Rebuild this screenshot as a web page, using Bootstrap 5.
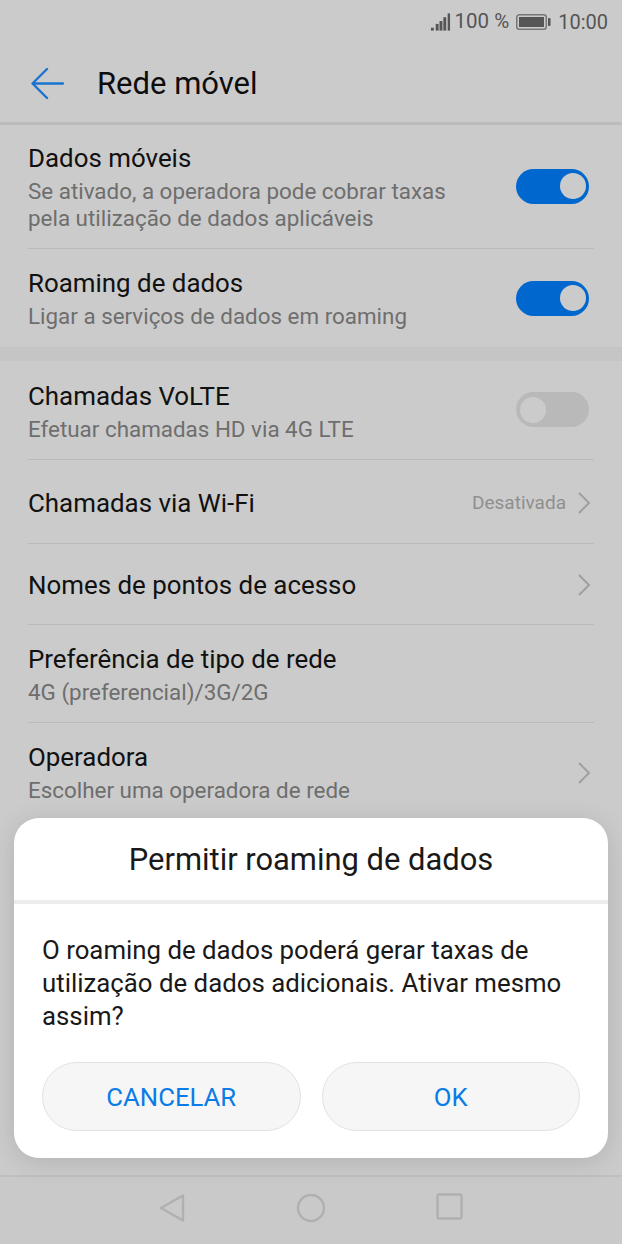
<!DOCTYPE html>
<html lang="pt">
<head>
<meta charset="utf-8">
<title>Rede móvel</title>
<link href="https://cdn.jsdelivr.net/npm/bootstrap@5.3.0/dist/css/bootstrap.min.css" rel="stylesheet">
<style>
html,body{margin:0;height:1244px;overflow:hidden}
body{background:#cbcbcb;font-family:Roboto,"Liberation Sans",sans-serif;color:#0d0d0d;position:relative;width:622px}
.screen-col{height:1244px}
.stat-bar{height:40px;padding:3px 14px 0 0;color:#555;font-size:20px;gap:4px}
.pct{font-size:20.500px}
.batt{margin-left:3px}
.clock{margin-left:3px}
.app-bar{height:82px;padding:5px 0 0 30px;gap:33px}
.app-title{font-size:31px;line-height:1;margin:0;font-weight:400;color:#0d0d0d}
.thick-rule{height:3px;background:#bcbcbc}
.pref-row{margin-left:28px;width:566px;border-bottom:1px solid #bababa;padding-right:5px}
.pref-row.last{border-bottom:0}
.r1{height:124px}.r2{height:98px}.r3{height:99px;padding-top:2px}.r4{height:84px;padding-top:3px}.r5{height:81px;padding-top:3px}.r6{height:98px;padding-top:1px}.r7{height:98px;padding-top:1px}
.pref-title{font-size:25.900px;line-height:33px;color:#111}
.pref-sub{font-size:22.400px;line-height:27px;color:#6e6e6e;margin-top:3px}
.band{height:14px;background:#c5c5c5}
.tgl{width:73px;height:35px;border-radius:18px;position:relative;flex:none;background:#0067ce}
.r1 .tgl{margin-top:-1px}
.tgl::after{content:"";position:absolute;top:4.500px;right:3.500px;width:26px;height:26px;border-radius:50%;background:#cbcbcb}
.tgl.off{background:#b9b9b9;margin-top:-3px}
.tgl.off::after{right:auto;left:4px}
.val{font-size:19px;color:#8f8f8f;margin-right:11px}
.chev{flex:none;margin-right:-2px}
.r5 .chev{margin-top:-2px}
.nav-strip{position:absolute;left:0;right:0;top:1175px;height:69px;border-top:2px solid #bfbfbf;background:#c9c9c9}
.nav-glyph{position:absolute;top:16px}
.g-back{left:159px}.g-home{left:296px}.g-recent{left:436px}
.dlg{position:absolute;left:14px;top:818px;width:594px;height:340px;background:#fff;border-radius:25px;box-shadow:0 4px 26px rgba(0,0,0,.12)}
.dlg-head{height:82px;font-size:30.900px;color:#191919;padding-top:3px}
.dlg-rule{height:4px;background:#ececec}
.dlg-text{padding:30px 28px 0 28px;font-size:25.800px;line-height:33px;color:#191919;height:158px;margin:0}
.dlg-btns{padding:0 28px;gap:21px}
.pill{flex:1 1 0;height:69px;border-radius:35px;background:#f6f6f6;border:1px solid #e2e2e2;color:#0a7ce6;font-size:25.700px;padding:2px 0 0}
.pill:hover{background:#f6f6f6;color:#0a7ce6;border-color:#e2e2e2}
</style>
</head>
<body>
<div class="screen-col d-flex flex-column">
  <div class="stat-bar d-flex align-items-center justify-content-end">
    <svg width="21" height="22" viewBox="0 0 22 22"><g fill="#555"><rect x="1" y="17" width="3" height="3"/><rect x="6" y="13" width="3" height="7"/><rect x="10" y="10" width="3" height="10"/><rect x="14" y="6" width="3" height="14"/><rect x="18.500" y="2" width="2.500" height="18"/></g></svg>
    <span class="pct">100 %</span>
    <svg class="batt" width="35" height="18" viewBox="0 0 35 18"><rect x=".75" y="1.750" width="29.500" height="14.500" rx="2.500" fill="none" stroke="#777" stroke-width="1.500"/><rect x="3" y="4" width="25" height="10" fill="#555"/><rect x="32" y="5" width="2.500" height="8" rx="1" fill="#555"/></svg>
    <span class="clock">10:00</span>
  </div>
  <div class="app-bar d-flex align-items-center">
    <svg width="34" height="34" viewBox="0 0 34 34"><path d="M33 16.500H3M17 2 2.500 16.500 17 31" fill="none" stroke="#1a74cf" stroke-width="2.400" stroke-linecap="round" stroke-linejoin="round"/></svg>
    <h1 class="app-title">Rede móvel</h1>
  </div>
  <div class="thick-rule"></div>

  <div class="pref-row r1 d-flex align-items-center justify-content-between">
    <div><div class="pref-title">Dados móveis</div><div class="pref-sub">Se ativado, a operadora pode cobrar taxas<br>pela utilização de dados aplicáveis</div></div>
    <span class="tgl"></span>
  </div>
  <div class="pref-row r2 last d-flex align-items-center justify-content-between">
    <div><div class="pref-title">Roaming de dados</div><div class="pref-sub">Ligar a serviços de dados em roaming</div></div>
    <span class="tgl"></span>
  </div>
  <div class="band"></div>
  <div class="pref-row r3 d-flex align-items-center justify-content-between">
    <div><div class="pref-title">Chamadas VoLTE</div><div class="pref-sub">Efetuar chamadas HD via 4G LTE</div></div>
    <span class="tgl off"></span>
  </div>
  <div class="pref-row r4 d-flex align-items-center justify-content-between">
    <div class="pref-title">Chamadas via Wi-Fi</div>
    <div class="d-flex align-items-center"><span class="val">Desativada</span>
      <svg class="chev" width="14" height="24" viewBox="0 0 14 24"><path d="M2 2l10 10L2 22" fill="none" stroke="#a0a0a0" stroke-width="2"/></svg></div>
  </div>
  <div class="pref-row r5 d-flex align-items-center justify-content-between">
    <div class="pref-title">Nomes de pontos de acesso</div>
    <svg class="chev" width="14" height="24" viewBox="0 0 14 24"><path d="M2 2l10 10L2 22" fill="none" stroke="#a0a0a0" stroke-width="2"/></svg>
  </div>
  <div class="pref-row r6 d-flex align-items-center justify-content-between">
    <div><div class="pref-title">Preferência de tipo de rede</div><div class="pref-sub">4G (preferencial)/3G/2G</div></div>
  </div>
  <div class="pref-row r7 last d-flex align-items-center justify-content-between">
    <div><div class="pref-title">Operadora</div><div class="pref-sub">Escolher uma operadora de rede</div></div>
    <svg class="chev" width="14" height="24" viewBox="0 0 14 24"><path d="M2 2l10 10L2 22" fill="none" stroke="#a0a0a0" stroke-width="2"/></svg>
  </div>
</div>

<div class="nav-strip">
  <svg class="nav-glyph g-back" width="27" height="30" viewBox="0 0 27 30"><path d="M24 2.500v25L2 15z" fill="none" stroke="#b0b0b0" stroke-width="2.400" stroke-linejoin="round"/></svg>
  <svg class="nav-glyph g-home" width="30" height="30" viewBox="0 0 30 30"><circle cx="15" cy="15" r="13" fill="none" stroke="#b0b0b0" stroke-width="2.400"/></svg>
  <svg class="nav-glyph g-recent" width="27" height="27" viewBox="0 0 27 27"><rect x="1.500" y="1.500" width="24" height="24" rx="1.500" fill="none" stroke="#b0b0b0" stroke-width="2.400"/></svg>
</div>

<div class="dlg">
  <div class="dlg-head d-flex align-items-center justify-content-center">Permitir roaming de dados</div>
  <div class="dlg-rule"></div>
  <p class="dlg-text">O roaming de dados poderá gerar taxas de utilização de dados adicionais. Ativar mesmo assim?</p>
  <div class="dlg-btns d-flex">
    <button type="button" class="btn pill">CANCELAR</button>
    <button type="button" class="btn pill">OK</button>
  </div>
</div>
</body>
</html>
